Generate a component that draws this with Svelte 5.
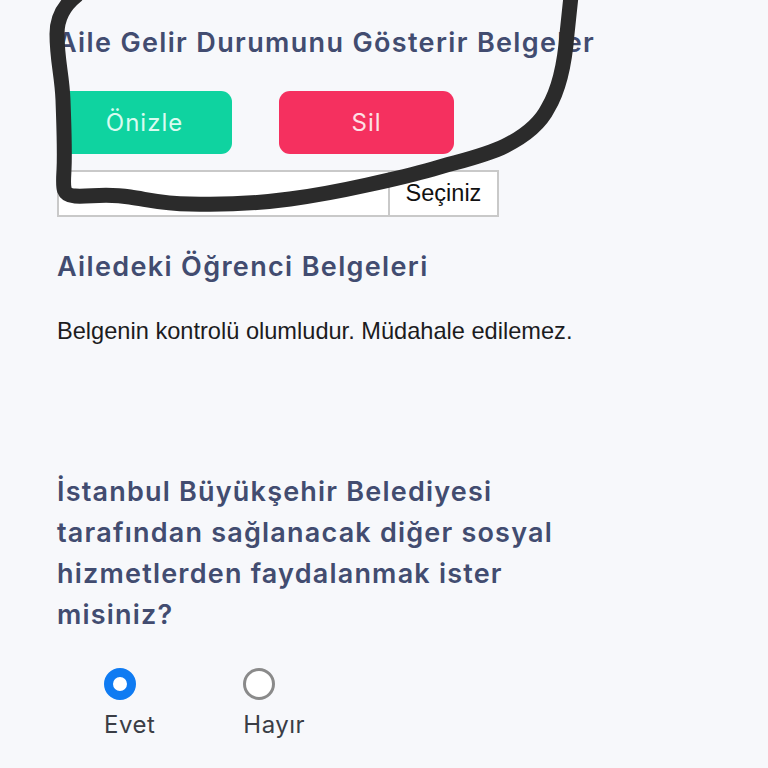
<style>
    :global(body) {
        margin: 0;
        background: #f7f8fb;
    }

    .page {
        position: relative;
        height: 768px;
        overflow: hidden;
        box-sizing: border-box;
        padding: 22px 0 0 57px;
        background: #f7f8fb;
        font-family: "Inter", "Liberation Sans", sans-serif;
    }

    h2 {
        margin: 0;
        font-size: 27px;
        line-height: 41px;
        font-weight: 600;
        color: #424c70;
        letter-spacing: 1.35px;
        white-space: nowrap;
    }

    .actions {
        display: flex;
        gap: 47px;
        margin-top: 28px;
    }

    .btn {
        display: flex;
        align-items: center;
        justify-content: center;
        height: 63px;
        border-radius: 11px;
        font-size: 24px;
        letter-spacing: 1px;
    }

    .btn.preview {
        width: 175px;
        background: #0fd3a0;
        color: #d9fbf0;
    }

    .btn.remove {
        width: 175px;
        background: #f5305f;
        color: #fde0e6;
    }

    .file {
        display: flex;
        width: 442px;
        height: 47px;
        box-sizing: border-box;
        margin-top: 16px;
        border: 2px solid #c9c9c9;
        background: #fff;
    }

    .file-name {
        flex: 1;
        border-right: 2px solid #c9c9c9;
    }

    .file-btn {
        width: 107px;
        display: flex;
        align-items: center;
        justify-content: center;
        font-family: "Liberation Sans", sans-serif;
        font-size: 23.5px;
        color: #111;
    }

    .students {
        margin-top: 29px;
    }

    .note {
        margin: 29px 0 0;
        font-family: "Liberation Sans", sans-serif;
        font-size: 23.6px;
        line-height: 30px;
        color: #1c1c1e;
    }

    .question {
        width: 540px;
        margin-top: 125px;
        letter-spacing: 1.2px;
        white-space: normal;
    }

    .choices {
        display: flex;
        gap: 88px;
        margin: 33px 0 0 47px;
    }

    .choice {
        display: flex;
        flex-direction: column;
        align-items: flex-start;
        gap: 10px;
        font-size: 24px;
        line-height: 30px;
        color: #3a3d45;
        letter-spacing: 0.5px;
    }

    .radio {
        display: block;
        width: 32px;
        height: 32px;
        box-sizing: border-box;
        border: 3px solid #8a8a8a;
        border-radius: 50%;
        background: #fff;
    }

    .radio.on {
        border: 9px solid #0f7bf2;
    }

    .scribble {
        position: absolute;
        left: 0;
        top: 0;
        pointer-events: none;
    }
</style>

<script>
    let choice = 'Evet';
    const choices = ['Evet', 'Hayır'];
</script>

<div class="page">
    <h2>Aile Gelir Durumunu Gösterir Belgeler</h2>

    <div class="actions">
        <div class="btn preview">Önizle</div>
        <div class="btn remove">Sil</div>
    </div>

    <div class="file">
        <div class="file-name"></div>
        <div class="file-btn">Seçiniz</div>
    </div>

    <h2 class="students">Ailedeki Öğrenci Belgeleri</h2>
    <p class="note">Belgenin kontrolü olumludur. Müdahale edilemez.</p>

    <h2 class="question">İstanbul Büyükşehir Belediyesi tarafından sağlanacak diğer sosyal hizmetlerden faydalanmak ister misiniz?</h2>

    <div class="choices">
        {#each choices as c}
            <div class="choice" on:click={() => (choice = c)}>
                <span class="radio" class:on={choice === c}></span>
                {c}
            </div>
        {/each}
    </div>

    <svg class="scribble" width="768" height="768" viewBox="0 0 768 768" fill="none">
        <path d="M76 -4 C66 4 57 16 57 34 C57 60 62 75 63 100 C64 130 65 150 64 170 C63 188 62 195 75 196 C90 197 105 193 130 197 C150 200 165 204 190 204 C220 205 260 203 290 199 C320 195 340 191 367 185 C390 180 412 175 433 169 C460 161 485 156 505 146 C525 136 540 124 548 108 C560 88 565 60 567 34 L571 -4" stroke="#2b2b2b" stroke-width="15" stroke-linecap="round" stroke-linejoin="round"/>
    </svg>
</div>
